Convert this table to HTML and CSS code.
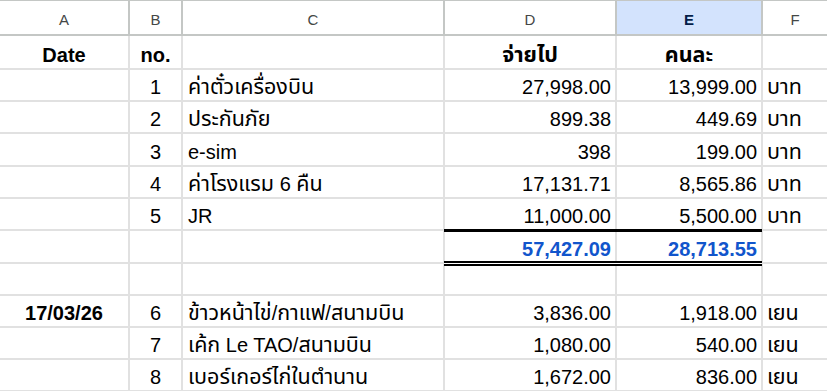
FILE: index.html
```html
<!DOCTYPE html>
<html lang="th">
<head>
<meta charset="utf-8">
<title>Sheet</title>
<link rel="stylesheet" href="styles.css">
</head>
<body>
<div class="sheet">
  <div class="colhead">
    <div class="h">A</div>
    <div class="h">B</div>
    <div class="h">C</div>
    <div class="h">D</div>
    <div class="h sel">E</div>
    <div class="h">F</div>
  </div>
  <div class="grid">
    <div class="c ctr b">Date</div><div class="c ctr b">no.</div><div class="c"></div><div class="c ctr b"><span class="v"><span class="th">จ่ายไป</span></span></div><div class="c ctr b"><span class="v"><span class="th">คนละ</span></span></div><div class="c"></div>

    <div class="c"></div><div class="c ctr">1</div><div class="c"><span class="v"><span class="th">ค่าตั๋วเครื่องบิน</span></span></div><div class="c num">27,998.00</div><div class="c num">13,999.00</div><div class="c unit"><span class="v"><span class="th">บาท</span></span></div>
    <div class="c"></div><div class="c ctr">2</div><div class="c"><span class="v"><span class="th">ประกันภัย</span></span></div><div class="c num">899.38</div><div class="c num">449.69</div><div class="c unit"><span class="v"><span class="th">บาท</span></span></div>
    <div class="c"></div><div class="c ctr">3</div><div class="c">e-sim</div><div class="c num">398</div><div class="c num">199.00</div><div class="c unit"><span class="v"><span class="th">บาท</span></span></div>
    <div class="c"></div><div class="c ctr">4</div><div class="c"><span class="v"><span class="th">ค่าโรงแรม</span> 6 <span class="th">คืน</span></span></div><div class="c num">17,131.71</div><div class="c num">8,565.86</div><div class="c unit"><span class="v"><span class="th">บาท</span></span></div>
    <div class="c"></div><div class="c ctr">5</div><div class="c">JR</div><div class="c num">11,000.00</div><div class="c num">5,500.00</div><div class="c unit"><span class="v"><span class="th">บาท</span></span></div>

    <div class="c"></div><div class="c"></div><div class="c"></div><div class="c num tot tot-d">57,427.09</div><div class="c num tot tot-e">28,713.55</div><div class="c"></div>

    <div class="c"></div><div class="c"></div><div class="c"></div><div class="c"></div><div class="c"></div><div class="c"></div>

    <div class="c ctr b">17/03/26</div><div class="c ctr">6</div><div class="c"><span class="v"><span class="th">ข้าวหน้าไข่</span>/<span class="th">กาแฟ</span>/<span class="th">สนามบิน</span></span></div><div class="c num">3,836.00</div><div class="c num">1,918.00</div><div class="c unit"><span class="v"><span class="th">เยน</span></span></div>
    <div class="c"></div><div class="c ctr">7</div><div class="c"><span class="v"><span class="th">เค้ก</span> Le TAO/<span class="th">สนามบิน</span></span></div><div class="c num">1,080.00</div><div class="c num">540.00</div><div class="c unit"><span class="v"><span class="th">เยน</span></span></div>
    <div class="c"></div><div class="c ctr">8</div><div class="c"><span class="v"><span class="th">เบอร์เกอร์ไก่ในตำนาน</span></span></div><div class="c num">1,672.00</div><div class="c num">836.00</div><div class="c unit"><span class="v"><span class="th">เยน</span></span></div>
  </div>
</div>
</body>
</html>
```
FILE: styles.css
```css
html, body {
  margin: 0;
  padding: 0;
  background: #ffffff;
  overflow: hidden;
}
body {
  font-family: "Liberation Sans", Arial, "Noto Sans Thai", Tahoma, sans-serif;
  width: 827px;
  height: 391px;
}
.sheet {
  width: 827px;
}
.colhead {
  display: grid;
  grid-template-columns: 128px 51px 260px 170px 144px 1fr;
  grid-template-rows: 33px;
  column-gap: 2px;
  background: #c4c7c5;
  border-top: 1px solid #c4c7c5;
  padding-bottom: 2px;
}
.h {
  background: #ffffff;
  color: #444746;
  font-size: 15px;
  line-height: 15px;
  display: flex;
  align-items: flex-end;
  justify-content: center;
  padding-bottom: 7px;
  box-sizing: border-box;
}
.h.sel {
  background: #d3e3fd;
  color: #041e49;
  font-weight: bold;
}
.grid {
  display: grid;
  grid-template-columns: 128px 51px 260px 170px 144px 1fr;
  grid-template-rows: 32px 30px 30px 31px 30px 30px 31px 30px 30px 30px 30px;
  column-gap: 2px;
  row-gap: 2px;
  background: #e1e1e1;
  padding-bottom: 2px;
}
.c {
  background: #ffffff;
  color: #000000;
  font-size: 20px;
  line-height: 20px;
  display: flex;
  align-items: flex-end;
  justify-content: flex-start;
  padding: 0 5px 3px 5px;
  box-sizing: border-box;
  white-space: nowrap;
}
.v {
  display: block;
  line-height: 20px;
  white-space: nowrap;
}
.th {
  font-size: 21.5px;
  line-height: 0;
}
.ctr {
  justify-content: center;
  padding-left: 2px;
  padding-right: 2px;
}
.num {
  justify-content: flex-end;
  padding-right: 4px;
}
.unit {
  padding-left: 4px;
}
.b {
  font-weight: bold;
}
.tot {
  font-weight: bold;
  color: #1155cc;
  position: relative;
}
.tot::before {
  content: "";
  position: absolute;
  top: -2px;
  height: 3px;
  background: #000000;
}
.tot::after {
  content: "";
  position: absolute;
  top: calc(100% - 1px);
  height: 1px;
  border-top: 2px solid #000000;
  border-bottom: 2px solid #000000;
  background: #ffffff;
  z-index: 1;
}
.tot-d::before,
.tot-d::after {
  left: -1px;
  right: -2px;
}
.tot-e::before,
.tot-e::after {
  left: 0;
  right: -1px;
}
```
